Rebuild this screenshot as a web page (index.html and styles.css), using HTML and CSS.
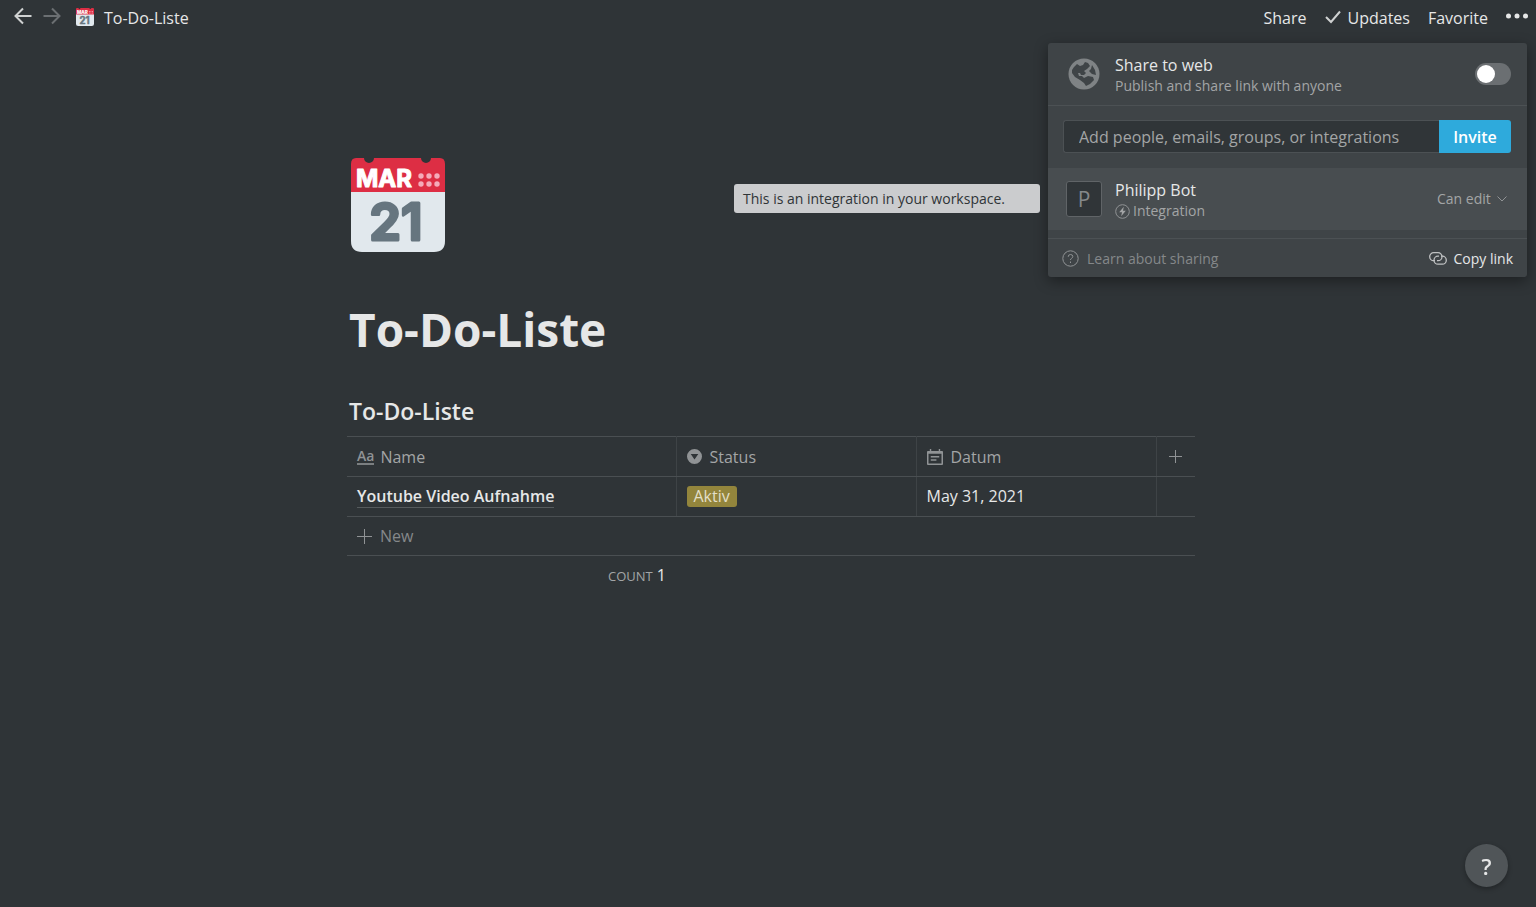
FILE: index.html
```html
<!DOCTYPE html>
<html lang="en">
<head>
  <meta charset="UTF-8">
  <meta name="viewport" content="width=device-width, initial-scale=1.0">
  <title>To-Do-Liste</title>
  <link rel="stylesheet" href="styles.css">
</head>
<body>

  <!-- Top bar -->
  <header class="topbar">
    <nav class="crumbs">
      <button class="icon-btn" aria-label="Back">
        <svg width="18" height="18" viewBox="0 0 18 18"><path d="M17.5 9H1.500M9 1.500L1.500 9L9 16.500"/></svg>
      </button>
      <button class="icon-btn dim" aria-label="Forward">
        <svg width="18" height="18" viewBox="0 0 18 18"><path d="M.5 9H16.500M9 1.500L16.500 9L9 16.500"/></svg>
      </button>
      <a href="#" class="crumb">
        <svg width="18" height="18" viewBox="0 0 94 94" aria-hidden="true">
          <path fill="#e1e8ed" d="M0 30H94V83Q94 94 83 94H11Q0 94 0 83Z"/>
          <path fill="#dd2e44" d="M5 0H13A5 5 0 1 0 23 0H70A5 5 0 1 0 80 0H89Q94 0 94 6V34H0V6Q0 0 5 0Z"/>
          <g fill="#f4abba">
            <circle cx="70" cy="18" r="2.700"/><circle cx="78" cy="18" r="2.700"/><circle cx="86" cy="18" r="2.700"/>
            <circle cx="70" cy="26" r="2.700"/><circle cx="78" cy="26" r="2.700"/><circle cx="86" cy="26" r="2.700"/>
          </g>
          <text class="cal-month" x="5" y="29">MAR</text>
          <text class="cal-day" x="45" y="82" text-anchor="middle">21</text>
        </svg>
        To-Do-Liste
      </a>
    </nav>
    <div class="actions">
      <button>Share</button>
      <button class="updates">
        <svg width="16" height="14" viewBox="0 0 16 14"><path d="M1 7L6 12L15 1.500"/></svg>
        Updates
      </button>
      <button>Favorite</button>
      <button class="more" aria-label="More">
        <svg width="22" height="6" viewBox="0 0 22 6"><circle cx="2.500" cy="3" r="2.500"/><circle cx="11" cy="3" r="2.500"/><circle cx="19.500" cy="3" r="2.500"/></svg>
      </button>
    </div>
  </header>

  <!-- Page content -->
  <main class="page">
    <svg class="page-icon" width="94" height="94" viewBox="0 0 94 94" aria-hidden="true">
      <path fill="#e1e8ed" d="M0 30H94V83Q94 94 83 94H11Q0 94 0 83Z"/>
      <path fill="#dd2e44" d="M5 0H13A5 5 0 1 0 23 0H70A5 5 0 1 0 80 0H89Q94 0 94 6V34H0V6Q0 0 5 0Z"/>
      <g fill="#f4abba">
        <circle cx="70" cy="18" r="2.700"/><circle cx="78" cy="18" r="2.700"/><circle cx="86" cy="18" r="2.700"/>
        <circle cx="70" cy="26" r="2.700"/><circle cx="78" cy="26" r="2.700"/><circle cx="86" cy="26" r="2.700"/>
      </g>
      <text class="cal-month" x="5" y="29">MAR</text>
      <text class="cal-day" x="45" y="82" text-anchor="middle">21</text>
    </svg>
    <h1>To-Do-Liste</h1>
    <h2>To-Do-Liste</h2>

    <table class="todo">
      <colgroup>
        <col class="col-name"><col class="col-status"><col class="col-date"><col>
      </colgroup>
      <thead>
        <tr>
          <th>
            <div class="prop name">
              <span class="aa">Aa</span>
              Name
            </div>
          </th>
          <th>
            <div class="prop">
              <svg width="15" height="15" viewBox="0 0 15 15"><path fill-rule="evenodd" d="M7.500 0A7.500 7.500 0 1 1 7.500 15A7.500 7.500 0 1 1 7.500 0ZM3.700 5L7.500 10.500L11.300 5Z"/></svg>
              Status
            </div>
          </th>
          <th>
            <div class="prop">
              <svg width="16" height="16" viewBox="0 0 17 17"><path fill-rule="evenodd" d="M3 0H4.500V2H12.500V0H14V2H16Q17 2 17 3V16Q17 17 16 17H1Q0 17 0 16V3Q0 2 1 2H3ZM1.600 5V15.400H15.400V5ZM4 7.500H13V9H4ZM4 11H10V12.500H4Z"/></svg>
              Datum
            </div>
          </th>
          <th class="add">
            <button aria-label="Add a property"><svg class="plus" width="13" height="13" viewBox="0 0 13 13"><path d="M6.500 0V13M0 6.500H13"/></svg></button>
          </th>
        </tr>
      </thead>
      <tbody>
        <tr>
          <td><a href="#" class="entry">Youtube Video Aufnahme</a></td>
          <td><span class="tag">Aktiv</span></td>
          <td>May 31, 2021</td>
          <td></td>
        </tr>
        <tr class="new-row">
          <td colspan="4">
            <button><svg class="plus" width="15" height="15" viewBox="0 0 15 15"><path d="M7.500 0V15M0 7.500H15"/></svg>New</button>
          </td>
        </tr>
      </tbody>
      <tfoot>
        <tr>
          <td class="count"><span>COUNT</span> 1</td>
          <td colspan="3"></td>
        </tr>
      </tfoot>
    </table>
  </main>

  <!-- Share menu -->
  <section class="share" aria-label="Share">
    <div class="share-web">
      <svg class="globe" width="32" height="32" viewBox="0 0 32 32">
        <circle cx="16" cy="16" r="15.500"/>
        <path d="M6 9L9 6L12 8L15 7L17 4L20 5L22 8L19 11L16 13L18 15L16 17L13 17L12 15L10 15L11 18L14 18L16 20L20 18L25 19L26 22L22 26L18 28L16 25L12 22L7 19L4 15L4 12Z"/>
        <path d="M24 7L27 12L28 17L24 16L21 13L23 11Z"/>
      </svg>
      <label class="grow" for="web">
        <span class="line1">Share to web</span>
        <span class="line2">Publish and share link with anyone</span>
      </label>
      <input type="checkbox" id="web" class="toggle">
    </div>

    <form class="invite">
      <input type="text" aria-label="Add people" placeholder="Add people, emails, groups, or integrations">
      <button type="button">Invite</button>
    </form>

    <div class="member">
      <div class="avatar">P</div>
      <div class="grow">
        <span class="line1">Philipp Bot</span>
        <span class="line2">
          <svg width="15" height="15" viewBox="0 0 15 15"><circle cx="7.500" cy="7.500" r="6.800"/><path class="bolt" d="M8.800 2.800L4.200 8.300H7L6.200 12.200L10.800 6.700H8Z"/></svg>
          Integration
        </span>
      </div>
      <label class="role">
        <select aria-label="Access">
          <option>Can edit</option>
        </select>
        <svg width="10" height="6" viewBox="0 0 10 6"><path d="M.5 .5L5 5L9.500 .5"/></svg>
      </label>
      <div class="tooltip" role="tooltip">This is an integration in your workspace.</div>
    </div>

    <div class="share-foot">
      <a href="#" class="learn">
        <svg width="17" height="17" viewBox="0 0 17 17"><circle cx="8.500" cy="8.500" r="7.700"/><path d="M6.200 6.800Q6.200 4.500 8.500 4.500T10.800 6.600Q10.800 7.700 9.600 8.300T8.500 10M8.500 11.500V13"/></svg>
        Learn about sharing
      </a>
      <button class="copy">
        <svg width="18" height="13" viewBox="0 0 18 13" stroke-width="1.300"><path d="M6 8.700H4.700A4 4 0 0 1 4.700 .7H9A4 4 0 0 1 9 8.700H8"/><path d="M12 4.200H13.300A4 4 0 0 1 13.300 12.200H9A4 4 0 0 1 9 4.200H10"/></svg>
        Copy link
      </button>
    </div>
  </section>

  <button class="help" aria-label="Help">?</button>

</body>
</html>
```
FILE: styles.css
```css
* {
  box-sizing: border-box;
}

body {
  margin: 0;
  min-height: 100vh;
  background-color: #2f3437;
  color: #e6e7e7;
  font-family: "Open Sans", "Noto Sans", sans-serif;
  font-size: 16px;
  line-height: 24px;
}

button, input, select {
  font: inherit;
  color: inherit;
  margin: 0;
}

button {
  padding: 0;
  background: none;
  border: none;
  cursor: pointer;
}

a {
  color: inherit;
  text-decoration: none;
}

svg {
  display: block;
  flex: none;
}

/* Calendar icon */
.cal-month {
  font: 700 24px Inter, sans-serif;
  fill: #ffffff;
  stroke: #ffffff;
  stroke-width: 1px;
  stroke-linejoin: round;
}

.cal-day {
  font: 600 51px Inter, sans-serif;
  fill: #66757f;
  stroke: #66757f;
  stroke-width: 3px;
  stroke-linejoin: round;
}

/* Top bar */
.topbar {
  display: flex;
  justify-content: space-between;
  align-items: center;
  height: 36px;
  padding: 0 8px 0 14px;
}

.crumbs, .actions, .crumb, .updates {
  display: flex;
  align-items: center;
}

.crumbs {
  gap: 11px;
}

.icon-btn {
  padding-bottom: 4px;
}

.icon-btn path, .updates path {
  fill: none;
  stroke: #cfd1d1;
  stroke-width: 2;
}

.icon-btn.dim path {
  stroke: #6b6f72;
}

.crumb {
  gap: 10px;
  margin-left: 4px;
}

.crumb svg {
  margin-bottom: 2px;
}

.actions {
  gap: 18px;
}

.updates {
  gap: 7px;
}

.updates svg {
  margin-bottom: 2px;
}

.more svg {
  fill: #e6e7e7;
  margin-bottom: 4px;
}

/* Page */
.page {
  max-width: 854px;
  margin: 0 auto;
  padding: 122px 0 40px 6px;
}

.page-icon {
  margin-left: 4px;
}

h1, h2 {
  margin: 0 0 0 2px;
}

h1 {
  margin-top: 47px;
  font-size: 46px;
  line-height: 60px;
}

h2 {
  margin-top: 35px;
  margin-bottom: 8px;
  font-size: 23px;
  line-height: 34px;
  font-weight: 600;
}

.todo {
  width: 100%;
  table-layout: fixed;
  border-collapse: collapse;
}

.col-name {
  width: 329px;
}

.col-status, .col-date {
  width: 240px;
}

.todo th, .todo td {
  height: 40px;
  padding: 0 10px;
  text-align: left;
  font-weight: 400;
  border-top: 1px solid #4a4f52;
  border-bottom: 1px solid #4a4f52;
  border-right: 1px solid #3e4346;
}

.todo th:last-child, .todo td:last-child {
  border-right: none;
}

.todo th {
  color: #a3a5a6;
}

.todo td {
  padding-bottom: 2px;
}

.prop {
  display: flex;
  align-items: center;
  gap: 8px;
}

.prop.name {
  gap: 6px;
}

.prop svg {
  fill: #909395;
}

.aa {
  font-size: 14px;
  line-height: 14px;
  font-weight: 600;
  color: #909395;
  border-bottom: 2px solid #7b7f81;
}

.plus {
  stroke: #909395;
}

.todo .add {
  padding: 0 12px;
}

.entry {
  font-weight: 600;
  border-bottom: 1px solid #565b5d;
}

.tag {
  display: inline-block;
  padding: 0 7px;
  line-height: 21px;
  border-radius: 3px;
  background-color: #93853c;
  color: #e2dfc9;
}

.todo .new-row td {
  height: 39px;
  padding-bottom: 0;
}

.new-row button {
  display: flex;
  align-items: center;
  gap: 8px;
  color: #85888a;
}

.todo tfoot td {
  border: none;
  padding-bottom: 0;
}

.todo .count {
  text-align: right;
}

.count span {
  font-size: 13px;
  color: #a3a5a6;
}

/* Share menu */
.share {
  position: absolute;
  top: 43px;
  right: 9px;
  width: 479px;
  background-color: #3f4447;
  border-radius: 3px;
  box-shadow: 0 4px 14px rgba(0, 0, 0, 0.4);
}

.share-web, .member {
  display: flex;
  align-items: center;
}

.share-web {
  height: 63px;
  gap: 15px;
  padding: 0 16px 0 20px;
  border-bottom: 1px solid #4c5154;
}

.globe circle {
  fill: #7f8385;
}

.globe path {
  fill: #3f4447;
}

.grow {
  flex: 1;
  padding-top: 2px;
}

.line1, .line2 {
  display: block;
}

.line1 {
  line-height: 22px;
}

.line2 {
  font-size: 14px;
  line-height: 20px;
  color: #a3a5a6;
}

.toggle {
  appearance: none;
  width: 36px;
  height: 22px;
  padding: 2px;
  border-radius: 11px;
  background-color: #6b6f72;
}

.toggle::before {
  content: "";
  display: block;
  width: 18px;
  height: 18px;
  border-radius: 50%;
  background-color: #ffffff;
}

.toggle:checked {
  background-color: #2eaadc;
}

.toggle:checked::before {
  margin-left: auto;
}

.invite {
  display: flex;
  height: 33px;
  margin: 14px 16px 15px 15px;
}

.invite input {
  flex: 1;
  min-width: 0;
  padding: 0 15px;
  background-color: #303538;
  border: 1px solid #4c5154;
  border-right: none;
  border-radius: 3px 0 0 3px;
}

.invite input::placeholder {
  color: #a3a5a6;
}

.invite button {
  width: 72px;
  background-color: #2eaadc;
  color: #ffffff;
  font-weight: 600;
  border-radius: 0 3px 3px 0;
}

.member {
  position: relative;
  height: 62px;
  gap: 13px;
  padding: 0 20px 0 18px;
  background-color: #484d50;
}

.avatar {
  width: 36px;
  height: 36px;
  border: 1px solid #606467;
  border-radius: 3px;
  background-color: #303538;
  color: #85888a;
  font-size: 21px;
  line-height: 35px;
  text-align: center;
}

.member .line2, .role, .learn, .copy {
  display: flex;
  align-items: center;
}

.member .line2 {
  gap: 3px;
}

.member svg, .learn svg {
  fill: none;
  stroke: #909395;
}

.member .bolt {
  fill: #a3a5a6;
  stroke: none;
}

.role {
  gap: 6px;
  font-size: 14px;
  color: #a3a5a6;
}

.role select {
  appearance: none;
  padding: 0;
  border: none;
  background: none;
}

.tooltip {
  position: absolute;
  top: 16px;
  right: calc(100% + 8px);
  width: 306px;
  padding: 0 9px;
  border-radius: 3px;
  background-color: #cbccce;
  color: #2f3437;
  font-size: 14px;
  line-height: 29px;
  white-space: nowrap;
}

.share-foot {
  display: flex;
  justify-content: space-between;
  height: 39px;
  margin-top: 8px;
  padding: 1px 14px 0;
  border-top: 1px solid #4c5154;
  font-size: 14px;
}

.learn {
  gap: 8px;
  color: #85888a;
}

.copy {
  gap: 7px;
}

.copy svg {
  fill: none;
  stroke: #c0c2c3;
}

/* Help button */
.help {
  position: fixed;
  right: 28px;
  bottom: 20px;
  width: 43px;
  height: 43px;
  border-radius: 50%;
  background-color: #505558;
  box-shadow: 0 2px 5px rgba(0, 0, 0, 0.3);
  font-size: 22px;
  font-weight: 600;
}
```
